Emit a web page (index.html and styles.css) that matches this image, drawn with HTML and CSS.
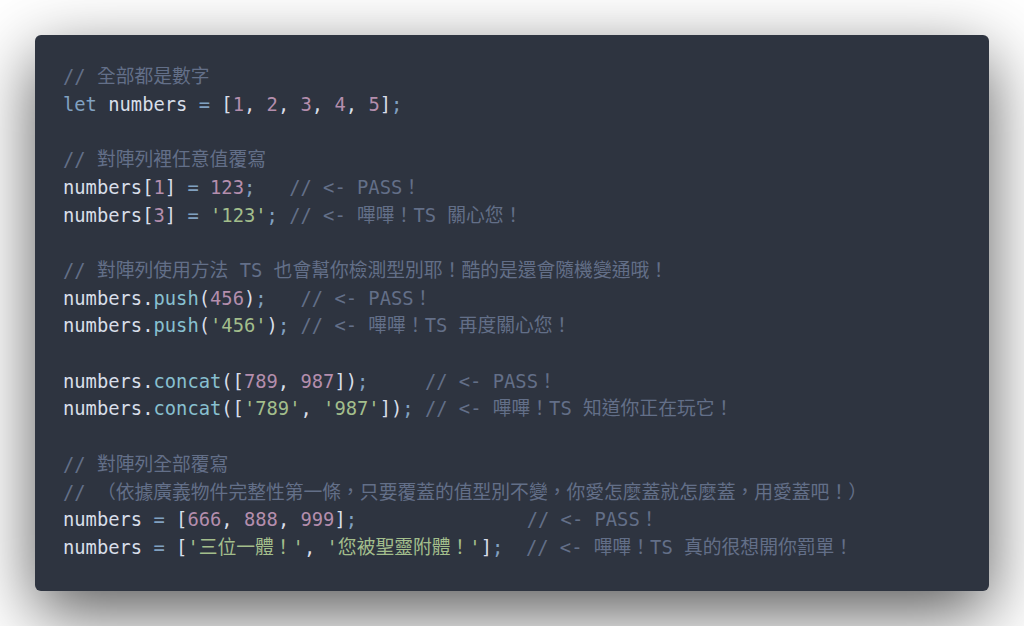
FILE: index.html
```html
<!DOCTYPE html>
<html lang="zh-Hant">
<head>
<meta charset="utf-8">
<title>TypeScript Array</title>
<link rel="stylesheet" href="styles.css">
</head>
<body>
<div class="stage">
<div class="window">
<pre class="code"><span class="c">// 全部都是數字</span>
<span class="k">let</span> numbers <span class="k">=</span> [<span class="n">1</span>, <span class="n">2</span>, <span class="n">3</span>, <span class="n">4</span>, <span class="n">5</span>]<span class="k">;</span>

<span class="c">// 對陣列裡任意值覆寫</span>
numbers[<span class="n">1</span>] <span class="k">=</span> <span class="n">123</span><span class="k">;</span>   <span class="c">// &lt;- PASS！</span>
numbers[<span class="n">3</span>] <span class="k">=</span> <span class="s">'123'</span><span class="k">;</span> <span class="c">// &lt;- 嗶嗶！TS 關心您！</span>

<span class="c">// 對陣列使用方法 TS 也會幫你檢測型別耶！酷的是還會隨機變通哦！</span>
numbers.<span class="f">push</span>(<span class="n">456</span>)<span class="k">;</span>   <span class="c">// &lt;- PASS！</span>
numbers.<span class="f">push</span>(<span class="s">'456'</span>)<span class="k">;</span> <span class="c">// &lt;- 嗶嗶！TS 再度關心您！</span>

numbers.<span class="f">concat</span>([<span class="n">789</span>, <span class="n">987</span>])<span class="k">;</span>     <span class="c">// &lt;- PASS！</span>
numbers.<span class="f">concat</span>([<span class="s">'789'</span>, <span class="s">'987'</span>])<span class="k">;</span> <span class="c">// &lt;- 嗶嗶！TS 知道你正在玩它！</span>

<span class="c">// 對陣列全部覆寫</span>
<span class="c">// （依據廣義物件完整性第一條，只要覆蓋的值型別不變，你愛怎麼蓋就怎麼蓋，用愛蓋吧！）</span>
numbers <span class="k">=</span> [<span class="n">666</span>, <span class="n">888</span>, <span class="n">999</span>]<span class="k">;</span>               <span class="c">// &lt;- PASS！</span>
numbers <span class="k">=</span> [<span class="s">'三位一體！'</span>, <span class="s">'您被聖靈附體！'</span>]<span class="k">;</span>  <span class="c">// &lt;- 嗶嗶！TS 真的很想開你罰單！</span></pre>
</div>
</div>
</body>
</html>
```

FILE: styles.css
```css
html, body {
  margin: 0;
  padding: 0;
  background: #ffffff;
}

.stage {
  width: 1024px;
  height: 626px;
  padding: 35px;
  box-sizing: border-box;
  overflow: hidden;
}

.window {
  width: 954px;
  height: 556px;
  box-sizing: border-box;
  background: #2e3440;
  border-radius: 6px;
  box-shadow: 0 22px 68px rgba(0, 0, 0, 0.65);
  padding: 28px 28px 29px;
}

.code {
  margin: 0;
  font-family: "DejaVu Sans Mono", "Noto Sans CJK TC", monospace;
  font-size: 18.8px;
  line-height: 27.7px;
  color: #d8dee9;
  white-space: pre;
}

.c { color: #636f88; }
.k { color: #81a1c1; }
.n { color: #b48ead; }
.s { color: #a3be8c; }
.f { color: #88c0d0; }
```
